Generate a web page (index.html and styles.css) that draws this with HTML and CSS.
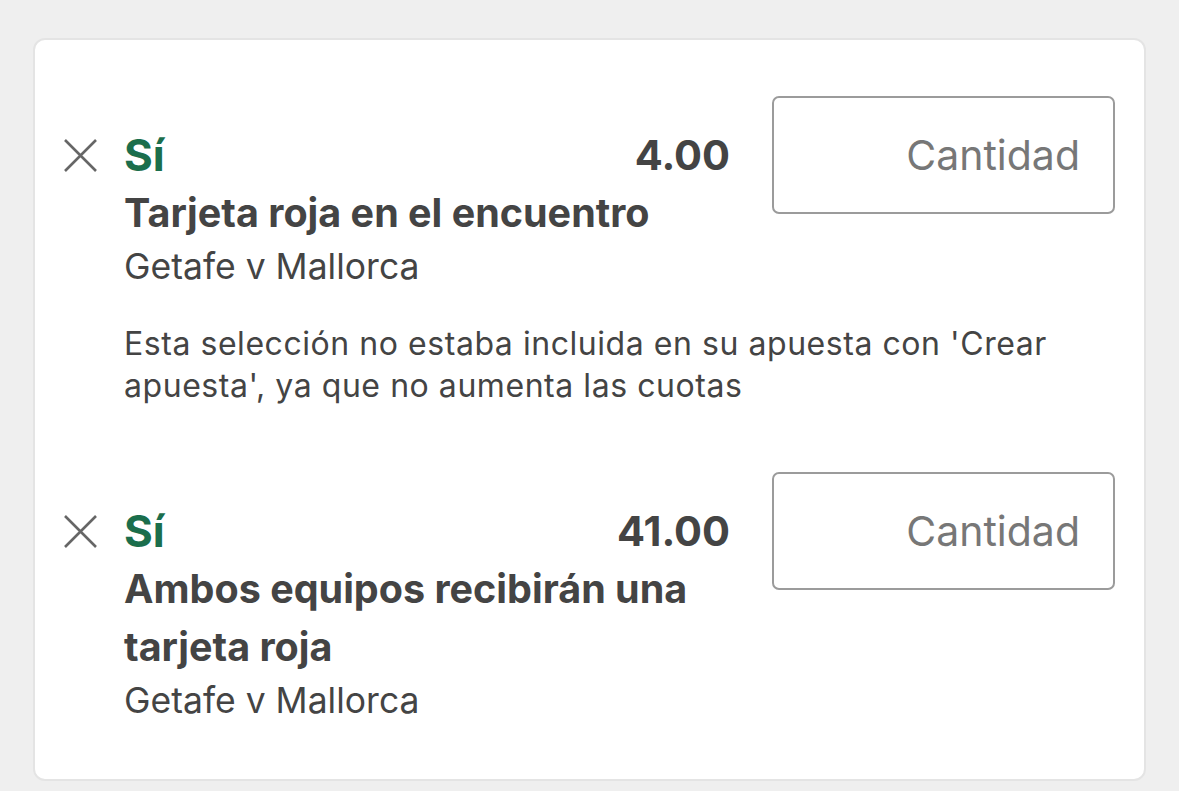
FILE: index.html
```html
<!DOCTYPE html>
<html lang="es">
<head>
<meta charset="utf-8">
<title>Boleto</title>
<link rel="stylesheet" href="styles.css">
</head>
<body>
<div class="card">
  <div class="sel">
    <button class="remove" aria-label="Eliminar">
      <svg viewBox="0 0 33 33" width="33" height="33"><path d="M1 1 L32 32 M32 1 L1 32" stroke="#666" stroke-width="2.6" fill="none"/></svg>
    </button>
    <div class="head"><span class="pick">Sí</span><span class="odds">4.00</span></div>
    <div class="stake">Cantidad</div>
    <div class="body">
      <div class="title">Tarjeta roja en el encuentro</div>
      <div class="match">Getafe v Mallorca</div>
    </div>
    <div class="note">Esta selección no estaba incluida en su apuesta con 'Crear apuesta', ya que no aumenta las cuotas</div>
  </div>
  <div class="sel sel-2">
    <button class="remove" aria-label="Eliminar">
      <svg viewBox="0 0 33 33" width="33" height="33"><path d="M1 1 L32 32 M32 1 L1 32" stroke="#666" stroke-width="2.6" fill="none"/></svg>
    </button>
    <div class="head"><span class="pick">Sí</span><span class="odds">41.00</span></div>
    <div class="stake">Cantidad</div>
    <div class="body">
      <div class="title">Ambos equipos recibirán una tarjeta roja</div>
      <div class="match">Getafe v Mallorca</div>
    </div>
  </div>
</div>
</body>
</html>
```

FILE: styles.css
```css
html, body {
  margin: 0;
  background: #efefef;
}
body {
  padding: 38px 33px 9px 33px;
  font-family: Inter, Roboto, "Liberation Sans", sans-serif;
  color: #444;
}
.card {
  box-sizing: border-box;
  width: 1113px;
  height: 743px;
  background: #fff;
  border: 2px solid #e4e4e4;
  border-radius: 12px;
  padding: 56px 29px 0 29px;
}
.sel {
  display: grid;
  grid-template-columns: 60px minmax(0, 1fr) 385px;
}
.sel-2 {
  margin-top: 65px;
}
.remove {
  grid-column: 1;
  grid-row: 1;
  align-self: center;
  width: 33px;
  height: 33px;
  margin: 30px 0 0 0;
  padding: 0;
  border: 0;
  background: none;
  display: flex;
}
.head {
  grid-column: 2;
  grid-row: 1;
  margin-top: 30px;
  height: 58px;
  display: flex;
  align-items: center;
  justify-content: space-between;
}
.pick {
  color: #1b6e4c;
  font-weight: 700;
  font-size: 44px;
}
.odds {
  font-weight: 700;
  font-size: 41.5px;
  color: #444;
}
.stake {
  grid-column: 3;
  grid-row: 1 / span 2;
  align-self: start;
  margin-left: 42px;
  box-sizing: border-box;
  height: 118px;
  border: 2px solid #9b9b9b;
  border-radius: 7px;
  display: flex;
  align-items: center;
  justify-content: flex-end;
  padding-right: 33px;
  font-size: 41px;
  color: #777;
}
.body {
  grid-column: 2;
  grid-row: 2;
}
.title {
  font-weight: 700;
  font-size: 39.5px;
  line-height: 58px;
}
.match {
  font-size: 35.5px;
  line-height: 50px;
}
.note {
  grid-column: 2 / span 2;
  grid-row: 3;
  margin-top: 31px;
  padding-right: 20px;
  font-size: 32px;
  letter-spacing: 0.55px;
  line-height: 42px;
}
```
